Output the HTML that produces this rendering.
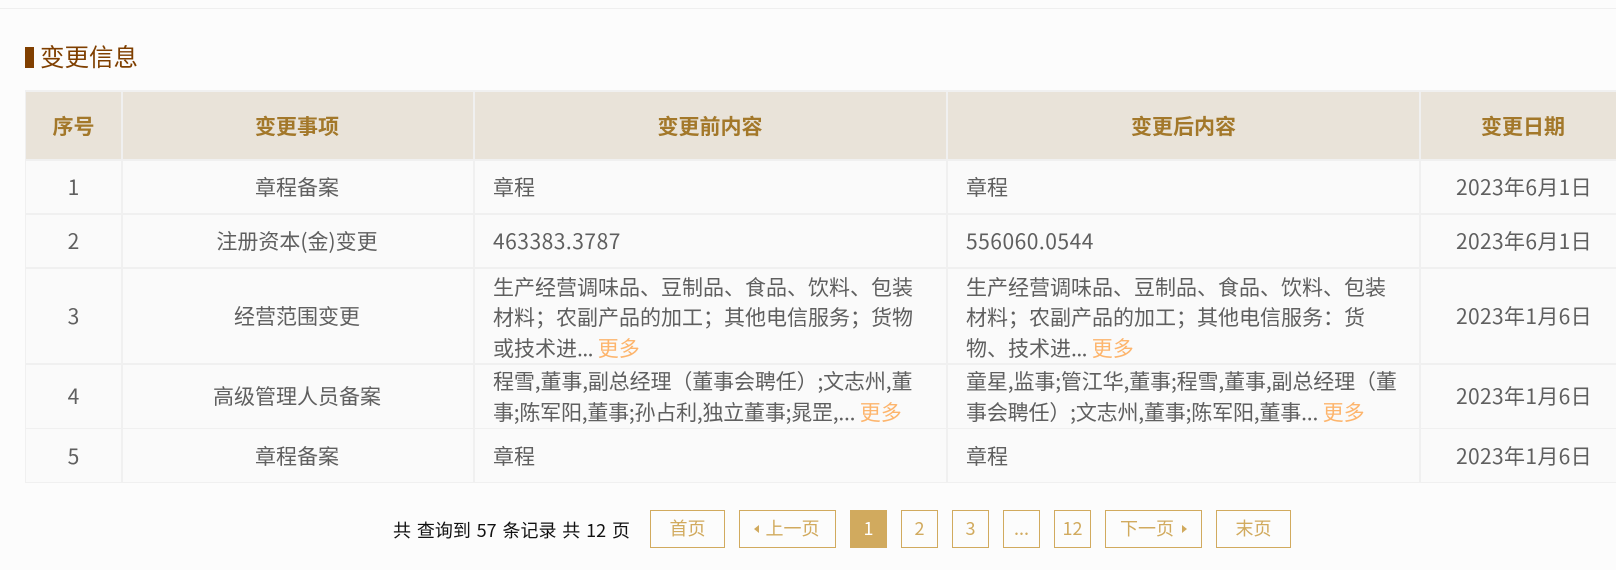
<!DOCTYPE html>
<html lang="zh"><head><meta charset="utf-8"><title>变更信息</title>
<style>
html,body{margin:0;padding:0;width:1616px;height:570px;overflow:hidden;background:#fcfcfc}
body{position:relative;font-family:"Noto Sans CJK SC","Liberation Sans",sans-serif;color:#5f5f5f}
.a{position:absolute}
.hl{position:absolute;left:25px;width:1591px;background:#f0f0f0}
.vl{position:absolute;background:#f0f0f0;width:2px}
.t{position:absolute;height:32px;line-height:32px;font-size:21px;white-space:nowrap}
.c{text-align:center}
.h{font-weight:700;color:#a3782a}
.m{color:#fdb56d;letter-spacing:0}
.n{letter-spacing:.5px}
.d{letter-spacing:.35px}
.e{letter-spacing:-.5px}
.p{position:absolute;top:510px;height:36px;line-height:35px;border:1px solid #d1aa5e;color:#d1aa5e;font-size:18px;text-align:center;box-sizing:content-box;white-space:nowrap}
</style></head><body>
<div class="a" style="left:0;top:8px;width:1616px;height:1px;background:#efefef"></div>
<div class="a" style="left:25px;top:47px;width:9px;height:21px;background:#803f00"></div>
<div class="a" style="left:40px;top:39px;height:36px;line-height:36px;font-size:24.5px;color:#7f3f00;white-space:nowrap">变更信息</div>

<div class="a" style="left:25px;top:90px;width:1591px;height:393px;background:#fafafa"></div>
<div class="a" style="left:25px;top:92px;width:1591px;height:67px;background:#e9e3d9"></div>
<div class="hl" style="top:90px;height:2px"></div>
<div class="hl" style="top:159px;height:2px"></div>
<div class="hl" style="top:213px;height:2px"></div>
<div class="hl" style="top:267px;height:2px"></div>
<div class="hl" style="top:363px;height:2px"></div>
<div class="hl" style="top:428px;height:1px"></div>
<div class="hl" style="top:482px;height:1px"></div>
<div class="vl" style="left:25px;top:90px;height:393px;width:1px"></div>
<div class="vl" style="left:121px;top:90px;height:393px"></div>
<div class="vl" style="left:473px;top:90px;height:393px"></div>
<div class="vl" style="left:946px;top:90px;height:393px"></div>
<div class="vl" style="left:1419px;top:90px;height:393px"></div>

<div class="t c h" style="left:26px;width:95px;top:110px">序号</div>
<div class="t c h" style="left:122px;width:350px;top:110px">变更事项</div>
<div class="t c h" style="left:474px;width:472px;top:110px">变更前内容</div>
<div class="t c h" style="left:948px;width:471px;top:110px">变更后内容</div>
<div class="t c h" style="left:1421px;width:204px;top:110px">变更日期</div>

<div class="t c" style="left:26px;width:95px;top:171px">1</div>
<div class="t c" style="left:122px;width:350px;top:171px">章程备案</div>
<div class="t" style="left:493px;top:171px">章程</div>
<div class="t" style="left:966px;top:171px">章程</div>
<div class="t c d" style="left:1421px;width:206px;top:171px">2023年6月1日</div>

<div class="t c" style="left:26px;width:95px;top:225px">2</div>
<div class="t c" style="left:122px;width:350px;top:225px">注册资本(金)变更</div>
<div class="t n" style="left:493px;top:225px">463383.3787</div>
<div class="t n" style="left:966px;top:225px">556060.0544</div>
<div class="t c d" style="left:1421px;width:206px;top:225px">2023年6月1日</div>

<div class="t c" style="left:26px;width:95px;top:300px">3</div>
<div class="t c" style="left:122px;width:350px;top:300px">经营范围变更</div>
<div class="t" style="left:493px;top:271px">生产经营调味品、豆制品、食品、饮料、包装</div>
<div class="t" style="left:493px;top:301px">材料；农副产品的加工；其他电信服务；货物</div>
<div class="t" style="left:493px;top:332px">或技术进<span class="e">...</span> <span class="m">更多</span></div>
<div class="t" style="left:966px;top:271px">生产经营调味品、豆制品、食品、饮料、包装</div>
<div class="t" style="left:966px;top:301px">材料；农副产品的加工；其他电信服务：货</div>
<div class="t" style="left:966px;top:332px">物、技术进<span class="e">...</span> <span class="m">更多</span></div>
<div class="t c d" style="left:1421px;width:206px;top:300px">2023年1月6日</div>

<div class="t c" style="left:26px;width:95px;top:380px">4</div>
<div class="t c" style="left:122px;width:350px;top:380px">高级管理人员备案</div>
<div class="t" style="left:493px;top:365px;letter-spacing:-.13px">程雪,董事,副总经理（董事会聘任）;文志州,董</div>
<div class="t" style="left:493px;top:396px;letter-spacing:-.22px">事;陈军阳,董事;孙占利,独立董事;晁罡,... <span class="m">更多</span></div>
<div class="t" style="left:966px;top:365px;letter-spacing:-.13px">童星,监事;管江华,董事;程雪,董事,副总经理（董</div>
<div class="t" style="left:966px;top:396px;letter-spacing:-.17px">事会聘任）;文志州,董事;陈军阳,董事... <span class="m">更多</span></div>
<div class="t c d" style="left:1421px;width:206px;top:380px">2023年1月6日</div>

<div class="t c" style="left:26px;width:95px;top:440px">5</div>
<div class="t c" style="left:122px;width:350px;top:440px">章程备案</div>
<div class="t" style="left:493px;top:440px">章程</div>
<div class="t" style="left:966px;top:440px">章程</div>
<div class="t c d" style="left:1421px;width:206px;top:440px">2023年1月6日</div>

<div class="a" style="left:393px;top:514px;height:32px;line-height:32px;font-size:18px;word-spacing:1.8px;color:#111;white-space:nowrap">共 查询到 57 条记录 共 12 页</div>
<div class="p" style="left:650px;width:73px">首页</div>
<div class="p" style="left:739px;width:95px"><span style="display:inline-block;width:0;height:0;border:4px solid transparent;border-right:5px solid #d1aa5e;border-left:0;margin-right:7px;margin-left:-2px;vertical-align:2px"></span>上一页</div>
<div class="p" style="left:850px;width:35px;background:#d1aa5e;color:#fff">1</div>
<div class="p" style="left:901px;width:35px">2</div>
<div class="p" style="left:952px;width:35px">3</div>
<div class="p" style="left:1003px;width:35px">...</div>
<div class="p" style="left:1054px;width:35px">12</div>
<div class="p" style="left:1105px;width:95px">下一页<span style="display:inline-block;width:0;height:0;border:4px solid transparent;border-left:5px solid #d1aa5e;border-right:0;margin-left:8px;vertical-align:2px"></span></div>
<div class="p" style="left:1216px;width:73px">末页</div>
</body></html>
